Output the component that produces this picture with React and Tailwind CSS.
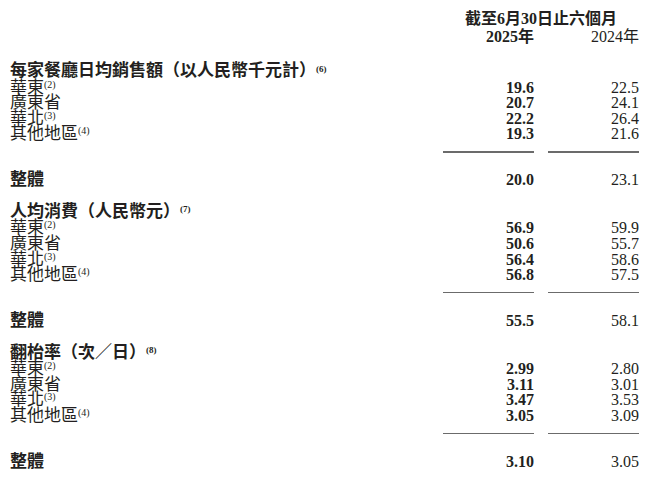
const sections = [
  {
    title: '每家餐廳日均銷售額（以人民幣千元計）',
    note: '(6)',
    rows: [
      { label: '華東', note: '(2)', a: '19.6', b: '22.5' },
      { label: '廣東省', a: '20.7', b: '24.1' },
      { label: '華北', note: '(3)', a: '22.2', b: '26.4' },
      { label: '其他地區', note: '(4)', a: '19.3', b: '21.6' },
    ],
    total: { a: '20.0', b: '23.1' },
  },
  {
    title: '人均消費（人民幣元）',
    note: '(7)',
    rows: [
      { label: '華東', note: '(2)', a: '56.9', b: '59.9' },
      { label: '廣東省', a: '50.6', b: '55.7' },
      { label: '華北', note: '(3)', a: '56.4', b: '58.6' },
      { label: '其他地區', note: '(4)', a: '56.8', b: '57.5' },
    ],
    total: { a: '55.5', b: '58.1' },
  },
  {
    title: '翻枱率（次／日）',
    note: '(8)',
    rows: [
      { label: '華東', note: '(2)', a: '2.99', b: '2.80' },
      { label: '廣東省', a: '3.11', b: '3.01' },
      { label: '華北', note: '(3)', a: '3.47', b: '3.53' },
      { label: '其他地區', note: '(4)', a: '3.05', b: '3.09' },
    ],
    total: { a: '3.10', b: '3.05' },
  },
];

const serif = "font-['Liberation_Serif','Noto_Sans_CJK_TC',serif]";
const num = "font-['Liberation_Serif',serif] text-[16px] text-right";

function Section({ s }) {
  return (
    <div className="grid grid-cols-[1fr_91px_91px] gap-x-[14px] mb-[15.5px]">
      {/* heading */}
      <div className={`${serif} col-span-3 h-[16.5px] leading-[16.5px] font-bold text-[17px] whitespace-nowrap`}>
        {s.title}
        <sup className="text-[9px] font-bold">{s.note}</sup>
      </div>

      {s.rows.map((r, i) => (
        <div key={i} className="contents">
          <div className={`${serif} h-[15.6px] leading-[15.6px] text-[17px] whitespace-nowrap`}>
            {r.label}
            {r.note && <sup className="text-[10px]">{r.note}</sup>}
          </div>
          <div className={`${num} font-bold h-[15.6px] leading-[15.6px]`}>{r.a}</div>
          <div className={`${num} h-[15.6px] leading-[15.6px]`}>{r.b}</div>
        </div>
      ))}

      {/* underline */}
      <div className="mt-[9.2px]"></div>
      <div className="mt-[9.2px] h-[1.5px] bg-[#6b6b6b]"></div>
      <div className="mt-[9.2px] h-[1.5px] bg-[#6b6b6b]"></div>

      {/* total */}
      <div className={`${serif} mt-[19.8px] h-[16px] leading-[16px] font-bold text-[17px]`}>整體</div>
      <div className={`${num} mt-[19.8px] h-[16px] leading-[16px] font-bold`}>{s.total.a}</div>
      <div className={`${num} mt-[19.8px] h-[16px] leading-[16px]`}>{s.total.b}</div>
    </div>
  );
}

export default function App() {
  return (
    <div className="w-[660px] h-[483px] bg-white text-[#231f20] pl-[10px] pr-[21px] pt-[9.5px] overflow-hidden">
      {/* column header */}
      <div className="grid grid-cols-[1fr_91px_91px] gap-x-[14px] mb-[17.5px]">
        <div className="row-span-2"></div>
        <div className={`${serif} col-span-2 text-center h-[18px] leading-[18px] font-bold text-[16px] whitespace-nowrap`}>
          截至6月30日止六個月
        </div>
        <div className={`${serif} text-[16px] text-right font-bold h-[18px] leading-[18px]`}>2025年</div>
        <div className={`${serif} text-[16px] text-right h-[18px] leading-[18px]`}>2024年</div>
      </div>

      {sections.map((s, i) => (
        <Section key={i} s={s} />
      ))}
    </div>
  );
}
